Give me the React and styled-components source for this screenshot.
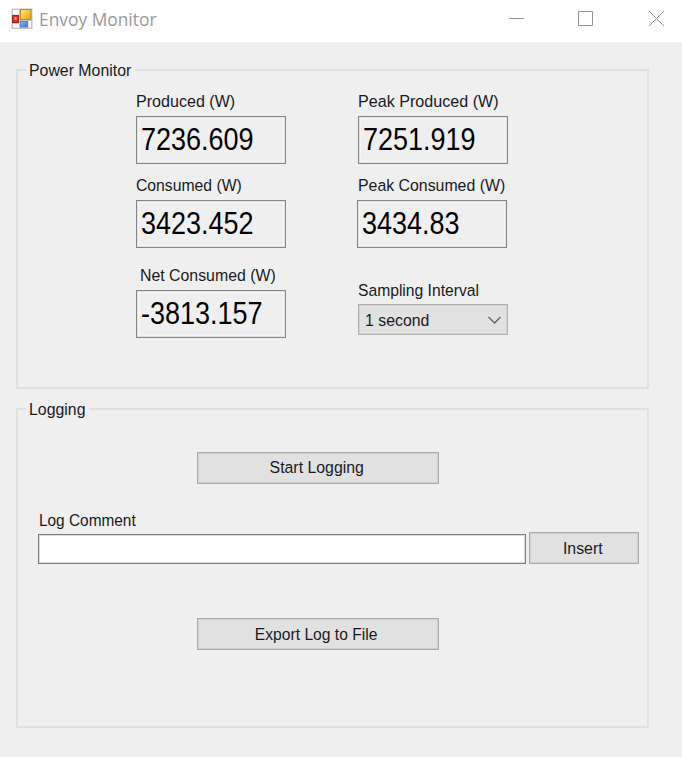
import React from "react";
import styled, { createGlobalStyle } from "styled-components";

const Global = createGlobalStyle`
  * { box-sizing: border-box; }
  body { margin: 0; background: #efefef; }
`;

const Window = styled.div`
  width: 682px;
  height: 757px;
  overflow: hidden;
  background: #efefef;
  color: #1a1a1e;
  font: 17.4px/20px "Liberation Sans", Arial, sans-serif;
`;

const TitleBar = styled.header`
  display: flex;
  align-items: center;
  height: 42px;
  padding: 0 17px 4px 11px;
  background: #fff;
`;

const Title = styled.h1`
  flex: 1;
  margin: 0 0 0 6px;
  color: #999;
  font: 400 18px/24px "Open Sans", "Noto Sans", sans-serif;
  transform: scaleX(${(p) => p.$fit});
  transform-origin: left;
  white-space: nowrap;
`;

const Controls = styled.div`
  display: flex;
  gap: 53px;
  margin-top: -1px;
`;

const Text = styled.span`
  display: inline-block;
  white-space: nowrap;
  transform: scaleX(${(p) => p.$fit ?? 0.912});
  transform-origin: ${(p) => p.$origin ?? "left"};
`;

const Body = styled.main`
  display: flex;
  flex-direction: column;
  gap: 19px;
  padding: 27px 33px 0 16px;
`;

const Group = styled.section`
  height: 320px;
  border: 2px solid #e0e0e0;
`;

const Legend = styled.div`
  width: ${(p) => p.$width}px;
  height: 20px;
  margin: -11px 0 0 8px;
  padding-left: 3px;
  background: #efefef;
`;

const Columns = styled.div`
  display: flex;
  gap: 72px;
  padding: 11px 0 0 118px;
`;

const Column = styled.div`
  display: flex;
  flex-direction: column;
  width: 150px;
`;

const Field = styled.div`
  margin: ${(p) => p.$top ?? 0}px 0 0 ${(p) => p.$shift ?? 0}px;
`;

const Label = styled.div`
  height: 24px;
  padding-left: ${(p) => p.$indent ?? 0}px;
`;

const Readout = styled.output`
  display: block;
  width: 150px;
  height: 48px;
  margin-top: 1px;
  padding: 3px 0 0 4px;
  border: 1px solid #858585;
  box-shadow: inset 0 0 0 1px #e3e3e3, inset 0 0 0 2px #f5f5f5;
  color: #000;
  font-size: 31.5px;
  line-height: 38px;
`;

const Select = styled.button`
  display: flex;
  align-items: center;
  justify-content: space-between;
  width: 150px;
  height: 31px;
  padding: 1px 5px 0 6px;
  border: 1px solid #b0b0b0;
  box-shadow: inset 0 0 0 1px #d3d3d3;
  background: #e1e1e1;
  color: inherit;
  font: inherit;
`;

const Button = styled.button`
  display: block;
  width: ${(p) => p.$width}px;
  height: ${(p) => p.$height ?? 32}px;
  padding: 0 3px ${(p) => p.$drop ?? 2}px 0;
  border: 1px solid #acacac;
  box-shadow: inset 0 0 0 1px #d0d0d0;
  background: #e1e1e1;
  color: inherit;
  font: inherit;
`;

const LogPanel = styled.div`
  display: flex;
  flex-direction: column;
  padding: 33px 8px 0 20px;

  > ${Button} { margin-left: 159px; }
`;

const CommentLabel = styled.div`
  height: 22px;
  margin-top: 26px;
  padding-left: 1px;
`;

const CommentRow = styled.div`
  display: flex;
  align-items: flex-end;
  gap: 3px;
  margin-bottom: 54px;
`;

const CommentInput = styled.input`
  width: 488px;
  height: 30px;
  padding: 0 4px;
  border: 1px solid #7d7d7d;
  box-shadow: inset 0 0 0 1px #dcdcdc;
  background: #fff;
  font: inherit;
`;

const AppIcon = () => (
  <svg width="22" height="22" viewBox="0 0 22 22">
    <defs>
      <linearGradient id="gold" x2="1" y2="1">
        <stop stopColor="#ffe68a" />
        <stop offset="1" stopColor="#e7a200" />
      </linearGradient>
      <linearGradient id="blue" x2="1" y2="1">
        <stop stopColor="#8fb9f5" />
        <stop offset="1" stopColor="#3c72d0" />
      </linearGradient>
    </defs>
    <rect x=".5" y=".5" width="21" height="20.5" fill="#c6c6c6" />
    <rect x="2" y="2" width="6" height="4.5" fill="#fff" />
    <rect x="2" y="16" width="6" height="3.5" fill="#fff" />
    <rect x="17.5" y="13" width="2.5" height="6.5" fill="#f7f7f7" />
    <rect x="9.5" y="1.5" width="10.5" height="10" fill="url(#gold)" stroke="#c08b1c" />
    <rect x="1.5" y="7.5" width="6" height="7" fill="#cb3325" stroke="#9d241c" />
    <rect x="3.5" y="9" width="2" height="3" fill="#ee9b8b" />
    <rect x="9.5" y="13.5" width="7" height="5.5" fill="url(#blue)" stroke="#5685cd" />
  </svg>
);

const Glyph = ({ d }) => (
  <svg width="17" height="17" viewBox="0 0 17 17" fill="none" stroke="#929292">
    <path d={d} />
  </svg>
);

const Chevron = () => (
  <svg width="15" height="10" viewBox="0 0 15 10" fill="none" stroke="#686868" strokeWidth="1.5">
    <path d="M1.5 2 7.5 8 13.5 2" />
  </svg>
);

const Reading = ({ label, value, fit, indent, top, shift }) => (
  <Field $top={top} $shift={shift}>
    <Label $indent={indent}><Text $fit={fit}>{label}</Text></Label>
    <Readout><Text $fit={0.857}>{value}</Text></Readout>
  </Field>
);

export default function App() {
  return (
    <Window>
      <Global />
      <TitleBar>
        <AppIcon />
        <Title $fit={0.965}>Envoy Monitor</Title>
        <Controls>
          <Glyph d="M1 8.5H16" />
          <Glyph d="M.5 1.5H14.5V15.5H.5Z" />
          <Glyph d="M1 1 16 16M16 1 1 16" />
        </Controls>
      </TitleBar>
      <Body>
        <Group>
          <Legend $width={109}><Text>Power Monitor</Text></Legend>
          <Columns>
            <Column>
              <Reading label="Produced (W)" value="7236.609" fit={0.925} />
              <Reading label="Consumed (W)" value="3423.452" fit={0.905} top={11} />
              <Reading label="Net Consumed (W)" value="-3813.157" indent={4} top={17} />
            </Column>
            <Column>
              <Reading label="Peak Produced (W)" value="7251.919" fit={0.927} />
              <Reading label="Peak Consumed (W)" value="3434.83" top={11} shift={-1} indent={1} />
              <Field $top={32}>
                <Label><Text $fit={0.9}>Sampling Interval</Text></Label>
                <Select><Text>1 second</Text><Chevron /></Select>
              </Field>
            </Column>
          </Columns>
        </Group>
        <Group>
          <Legend $width={63}><Text>Logging</Text></Legend>
          <LogPanel>
            <Button $width={242}><Text $origin="center">Start Logging</Text></Button>
            <CommentLabel><Text $fit={0.885}>Log Comment</Text></CommentLabel>
            <CommentRow>
              <CommentInput aria-label="Log Comment" />
              <Button $width={110} $drop={0}><Text $origin="center">Insert</Text></Button>
            </CommentRow>
            <Button $width={242} $drop={0}><Text $fit={0.9} $origin="center">Export Log to File</Text></Button>
          </LogPanel>
        </Group>
      </Body>
    </Window>
  );
}
